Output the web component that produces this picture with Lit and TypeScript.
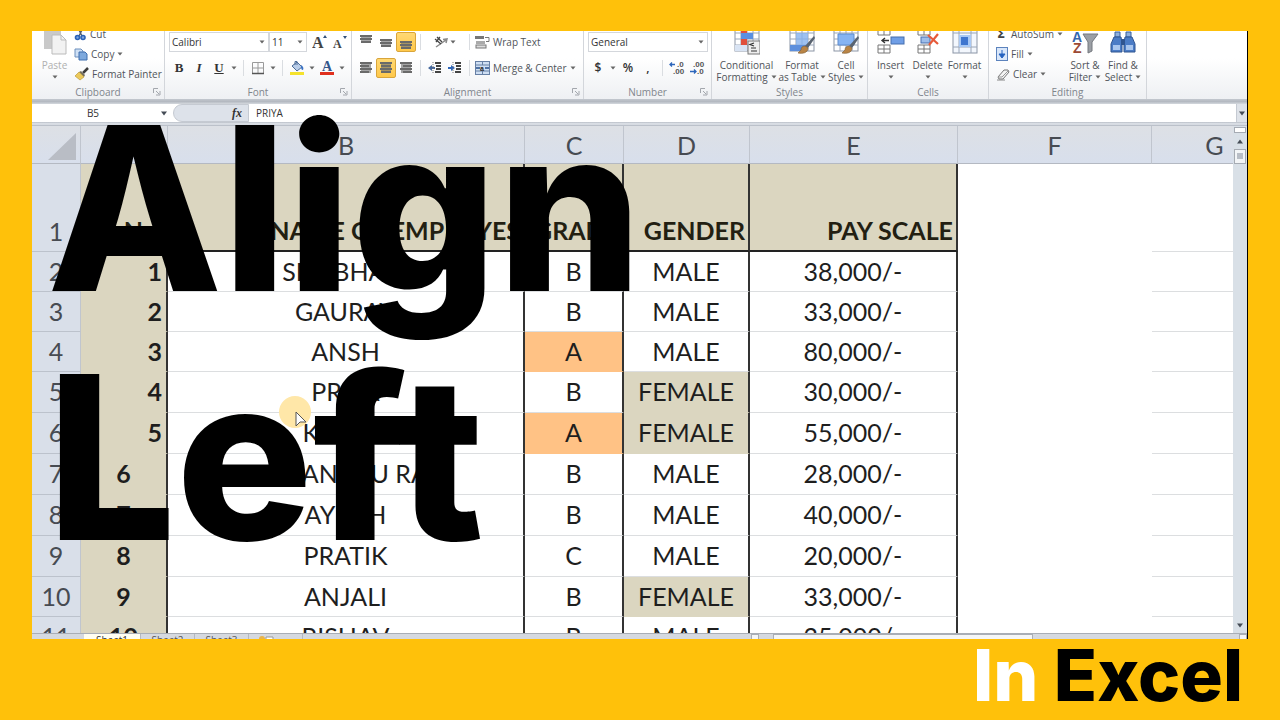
import { LitElement, html, css, svg, nothing } from "lit";
import { customElement } from "lit/decorators.js";
import { classMap } from "lit/directives/class-map.js";

const icon = (w: number, h: number, body: unknown) =>
  html`<svg class="ico" width=${w} height=${h} viewBox="0 0 ${w} ${h}" aria-hidden="true">${body}</svg>`;

const caret = html`<svg class="caret" width="6" height="4" viewBox="0 0 6 4" aria-hidden="true"><path d="M.5 .5h5L3 3.5z" fill="#666" /></svg>`;

const lines = (top: number, rows: number[][]) =>
  icon(14, 14, svg`<rect x="2" y=${top} width="10" height=${rows.length * 3 - 1} fill="#6a6a6a" opacity=".6"/>
    ${rows.map(([x, w], i) => svg`<rect x=${x} y=${top + i * 3} width=${w} height="2" fill="#6a6a6a"/>`)}`);

const grid = (extra: unknown) =>
  icon(26, 24, svg`
    <rect x="1" y="-6" width="24" height="26" fill="#fff" stroke="#8b95a5"/>
    <path d="M1 2h24M1 8h24M1 14h24M7 -6v26M13 -6v26M19 -6v26" stroke="#9aa6b8" fill="none"/>
    ${extra}`);

const brush = svg`<path d="M25 5l-9 10 3 2 7-10z" fill="#59636f"/><path d="M16 15c-3 0-4 2-4 4l-3 3c4 1 10 0 10-5z" fill="#b98445" stroke="#7c5a31" stroke-width=".6"/>`;

const ic = {
  paste: icon(24, 24, svg`<path d="M1-4h17v22H1z" fill="#c9c9c9"/><path d="M9 4h9l5 5v14H9z" fill="#f2f2f2" stroke="#bbb"/><path d="M18 4v5h5" fill="none" stroke="#bbb"/>`),
  cut: icon(13, 13, svg`<path d="M4 0l4 8M9 0L5 8" stroke="#55606e" stroke-width="1.4"/><circle cx="3.500" cy="9.500" r="2" fill="#7ea4dc" stroke="#2b62b8" stroke-width="1.600"/><circle cx="9" cy="9.500" r="2" fill="#7ea4dc" stroke="#2b62b8" stroke-width="1.600"/>`),
  copy: icon(14, 13, svg`<path d="M1 1h6l2 2v6H1z" fill="#cfe0f5" stroke="#6d8fbd"/><path d="M5 4h6l2 2v6H5z" fill="#7ea9dd" stroke="#3f6fae"/>`),
  painter: icon(15, 14, svg`<path d="M14 1L9 6" stroke="#3c3c3c" stroke-width="2.500"/><path d="M7 4l4 4-1 2-5-5z" fill="#77705f"/><path d="M5 5l5 5-4 3-5-4z" fill="#ecc95b" stroke="#b08e2c" stroke-width=".6"/>`),
  growA: icon(16, 16, svg`<text x="0" y="14" font-family="Liberation Serif" font-weight="700" font-size="16" fill="#444">A</text><path d="M11 4l2-3 2 3z" fill="#33517c"/>`),
  shrinkA: icon(16, 16, svg`<text x="1" y="14" font-family="Liberation Serif" font-weight="700" font-size="12" fill="#444">A</text><path d="M11 2h4l-2 3z" fill="#33517c"/>`),
  borders: icon(14, 14, svg`<path d="M1.500 1.500h11v11h-11zM7 1.500v11M1.500 7h11" fill="none" stroke="#9a9a9a"/><path d="M1 12.500h12" stroke="#555" stroke-width="1.500"/>`),
  bucket: icon(16, 16, svg`<path d="M3 6l5-4 5 5-5 4z" fill="#b9cde8" stroke="#4d6d98"/><path d="M6 5V1.500h2V5" fill="none" stroke="#4d6d98"/><path d="M12 5c2 1 3 3 2 5-2 0-2-2-2-5z" fill="#3a72c4"/><rect x="1" y="12" width="14" height="3" fill="#f5e22c"/>`),
  fontA: icon(16, 16, svg`<text x="3" y="11" font-family="Liberation Serif" font-weight="700" font-size="14" fill="#34568b">A</text><rect x="1" y="12" width="14" height="3" fill="#e0301e"/>`),
  top: lines(0, [[1, 12], [1, 12], [2, 10]]),
  mid: lines(4, [[1, 12], [1, 12], [2, 10]]),
  bot: lines(6, [[1, 12], [1, 12], [2, 10]]),
  left: lines(1, [[1, 12], [1, 9], [1, 12], [1, 9]]),
  center: lines(1, [[1, 12], [2, 10], [1, 12], [2, 10]]),
  right: lines(1, [[1, 12], [4, 9], [1, 12], [4, 9]]),
  orient: icon(16, 14, svg`<path d="M2 12L12 5M9 4.500l4-.5-1 4" fill="none" stroke="#8a8a8a" stroke-width="1.500"/><path d="M1 4l6 5M3 2l5 5M2 7l4-5" stroke="#444" stroke-width="1.300" fill="none"/>`),
  outdent: icon(14, 14, svg`<path d="M7 2h6M8 5h5M8 8h5M7 11h6" stroke="#444" stroke-width="2"/><path d="M0 7l4-3v2h3v2H4v2z" fill="#44679c"/><path d="M5 1v12" stroke="#777" stroke-dasharray="1 1"/>`),
  indent: icon(14, 14, svg`<path d="M7 2h6M8 5h5M8 8h5M7 11h6" stroke="#444" stroke-width="2"/><path d="M7 7L3 4v2H0v2h3v2z" fill="#2d66bb"/><path d="M5 1v12" stroke="#777" stroke-dasharray="1 1"/>`),
  wrap: icon(15, 14, svg`<rect x="0" y="1" width="9" height="3" fill="#777"/><rect x="1" y="6" width="9" height="3" fill="#aaa"/><rect x="1" y="10" width="10" height="3" fill="#ddd" stroke="#777"/><path d="M10 2.500h4v4h-3" fill="none" stroke="#777"/>`),
  merge: icon(15, 14, svg`<rect x=".5" y=".5" width="14" height="13" fill="#cfdff3" stroke="#6780a5"/><path d="M.5 4h14M.5 10h14M7.500.5V4M7.500 10v3.500" stroke="#6780a5"/><path d="M1 7h4M14 7h-4" stroke="#274f8b" stroke-width="1.500"/><text x="5" y="9.500" font-family="Liberation Sans" font-weight="700" font-size="7" fill="#222">a</text>`),
  incDec: icon(16, 16, svg`<path d="M1 4.500h5M3 2.500l-2 2 2 2" stroke="#2d66bb" stroke-width="1.300" fill="none"/><text x="8" y="7" font-family="Liberation Sans" font-weight="700" font-size="8" fill="#555">.0</text><text x="4" y="14" font-family="Liberation Sans" font-weight="700" font-size="8" fill="#555">.00</text>`),
  decDec: icon(16, 16, svg`<text x="4" y="7" font-family="Liberation Sans" font-weight="700" font-size="8" fill="#555">.00</text><text x="8" y="14" font-family="Liberation Sans" font-weight="700" font-size="8" fill="#555">.0</text><path d="M1 11.500h6M5 9.500l2 2-2 2" stroke="#2d66bb" stroke-width="1.300" fill="none"/>`),
  cond: grid(svg`<path d="M7 -6h6v8H7zM7 8h6v6H7z" fill="#e0503c"/><path d="M13 2h6v6h-6z" fill="#5a8fe0"/><path d="M7 2h6v6H7z" fill="#5a8fe0"/><path d="M1 14h12v6H1z" fill="#d9e4f4"/><rect x="14" y="10" width="12" height="13" fill="#eee" stroke="#777"/><path d="M20 12l-4 1.500 4 1.500M17 17h5M17 20h6" stroke="#333" stroke-width="1.200" fill="none"/>`),
  table: grid(svg`<path d="M7 2h12v12H7z" fill="#86b1ec" opacity=".8"/><path d="M1 14h16v6H1z" fill="#5d8fdc"/>${brush}`),
  cell: grid(svg`<path d="M5 3h16v11H5z" fill="#86b4f3" stroke="#5f8cce"/>${brush}`),
  insert: icon(28, 24, svg`<path d="M1-4h12v8H1zM1 14h12v8H1zM7-4v8M7 14v8M1 18h12" fill="#fff" stroke="#777"/><rect x="14" y="6" width="13" height="7" fill="#6f9ee6" stroke="#466fae"/><path d="M12 9.500H5M8 7L5 9.500 8 12" stroke="#333" stroke-width="1.400" fill="none"/>`),
  del: icon(24, 24, svg`<path d="M2-4h12v8H2zM2 14h12v8H2zM8-4v8M8 14v8M2 18h12" fill="#fff" stroke="#777"/><rect x="5" y="6" width="9" height="6" fill="#9dbdea" stroke="#466fae"/><path d="M12 4l10 9M22 3l-9 11" stroke="#e65a3a" stroke-width="2.200"/>`),
  format: icon(26, 24, svg`<rect x="1" y="-6" width="24" height="28" fill="#f3f7fd" stroke="#8b95a5"/><path d="M1 2h24M1 16h24M7-6v28M19-6v28" stroke="#9aa6b8"/><path d="M7 4h12v12H7z" fill="#a9c9f5"/><path d="M9 6h7v8H9z" fill="#3f76cf"/>`),
  sum: icon(12, 12, svg`<text x="1" y="10" font-family="DejaVu Sans" font-weight="700" font-size="12" fill="#444">Σ</text>`),
  fill: icon(12, 14, svg`<rect x=".5" y=".5" width="11" height="13" fill="#d9e7fa" stroke="#5c83bd"/><path d="M6 3v5M3 7l3 4 3-4z" fill="#2562c0" stroke="#2562c0"/>`),
  clear: icon(14, 13, svg`<path d="M2 9l6-7h4l1 2-6 7H3z" fill="#f4f4f4" stroke="#777"/><path d="M2 9h4l6-6" fill="none" stroke="#999"/><path d="M1 12h8" stroke="#888"/>`),
  sort: icon(28, 24, svg`<text x="1" y="11" font-family="Liberation Sans" font-weight="700" font-size="14" fill="#3566ad">A</text><text x="2" y="22" font-family="Liberation Sans" font-weight="700" font-size="14" fill="#9c4a35">Z</text><path d="M12 3h15l-6 8v9l-4 2v-11z" fill="#9b9fa5" stroke="#74787e"/>`),
  find: icon(26, 24, svg`<path d="M5 1h5v5H5zM16 1h5v5h-5z" fill="#8fb0dd" stroke="#385f9b"/><path d="M4 6h7l1 6v9H1v-8zM15 6h7l3 7v8H14v-9z" fill="#4b7cc6" stroke="#2f5590"/><rect x="11" y="8" width="4" height="6" fill="#2f5590"/><path d="M3 14h7v5H3zM16 14h7v5h-7z" fill="#a9c6ee"/>`),
};

interface Row { n: number; no: string; name: string; grade: string; sex: string; pay: string }
const rows: Row[] = [
  ["1", "SHUBHAM", "B", "MALE", "38,000/-"],
  ["2", "GAURAV", "B", "MALE", "33,000/-"],
  ["3", "ANSH", "A", "MALE", "80,000/-"],
  ["4", "PRIYA", "B", "FEMALE", "30,000/-"],
  ["5", "KAVITA", "A", "FEMALE", "55,000/-"],
  ["6", "HIMANSHU RAJ", "B", "MALE", "28,000/-"],
  ["7", "AYUSH", "B", "MALE", "40,000/-"],
  ["8", "PRATIK", "C", "MALE", "20,000/-"],
  ["9", "ANJALI", "B", "FEMALE", "33,000/-"],
  ["10", "RISHAV", "B", "MALE", "25,000/-"],
].map(([no, name, grade, sex, pay], i) => ({ n: i + 2, no, name, grade, sex, pay }));

@customElement("excel-ribbon")
export class ExcelRibbon extends LitElement {
  static styles = css`
    :host { display: block; }
    .ribbon {
      display: flex; height: 68px; overflow: hidden;
      background: linear-gradient(#fff 40%, #eef0f3);
      font: 500 10px/12px "Open Sans", sans-serif; color: #50545a;
    }
    .edge { height: 5px; background: linear-gradient(#c3c8cf, #b4b9c1 50%, #d4d8de); }
    .group { display: flex; flex-direction: column; border-right: 1px solid #d3d6db; box-sizing: border-box; flex: none; }
    .body { flex: 1; min-height: 0; display: flex; align-items: flex-end; padding: 0 4px; }
    .label { display: flex; justify-content: center; height: 15px; line-height: 16px; color: #80858c; position: relative; }
    .launch { position: absolute; right: 3px; top: 4px; }
    .w-clip { width: 133px; } .w-font { width: 187px; } .w-align { width: 232px; } .w-num { width: 128px; }
    .w-style { width: 156px; } .w-cells { width: 121px; } .w-edit { width: 158px; }
    button {
      all: unset; box-sizing: border-box; display: inline-flex; align-items: center; justify-content: center;
      white-space: nowrap; flex: none;
    }
    svg { display: block; flex: none; overflow: hidden; }
    .rows { display: flex; flex-direction: column; gap: 6px; padding-bottom: 6px; flex: 1; }
    .row { display: flex; align-items: center; height: 20px; }
    .tool { width: 20px; height: 20px; }
    .wide { width: 40px; }
    .drop { width: 10px; height: 20px; }
    .on { background: linear-gradient(#ffd873, #ffc84a); border: 1px solid #d9a53a; border-radius: 2px; }
    .sep { width: 1px; height: 16px; margin: 0 4px; background: #dadde1; flex: none; }
    .text { gap: 3px; height: 20px; padding-left: 1px; }
    .glyph { font: 700 13px/20px "Liberation Serif", serif; color: #333; }
    .italic { font-style: italic; } .under { text-decoration: underline; }
    .sans { font: 600 12px/20px "Open Sans", sans-serif; }
    .pick { position: relative; display: flex; box-sizing: border-box; height: 20px; }
    .pick select {
      appearance: none; border: 1px solid #d4d7dc; border-radius: 0; background: #fff; width: 100%; margin: 0;
      padding: 0 2px; font: 500 10px/16px "Open Sans", sans-serif; color: #333;
    }
    .pick .caret { position: absolute; right: 4px; top: 8px; }
    .p-name { width: 100px; } .p-size { width: 38px; margin-right: 3px; } .p-num { width: 120px; }
    .big { flex-direction: column; text-align: center; height: 54px; justify-content: flex-end; padding-bottom: 1px; }
    .big .ico { margin-bottom: 4px; }
    .two { display: flex; height: 12px; align-items: center; justify-content: center; gap: 3px; }
    .b-cond { width: 61px; } .b-table { width: 50px; } .b-cell { width: 38px; } .b-std { width: 37px; }
    .stack { display: flex; flex-direction: column; margin-left: 1px; }
    .faint { color: #b0b0b0; }
    .stack button { height: 20px; gap: 3px; justify-content: flex-start; }
    .w-edit .stack { margin: 0 3px; }
  `;

  private launch = html`<svg class="launch" width="8" height="8" viewBox="0 0 8 8"><path d="M.5 5V.5H5M3 3l3 3M7 3v4H3" fill="none" stroke="#a3a7ad" /></svg>`;

  private group(cls: string, label: string, body: unknown, launcher = false) {
    return html`<section class="group ${cls}" aria-label=${label}>
      <div class="body">${body}</div>
      <div class="label">${label}${launcher ? this.launch : nothing}</div>
    </section>`;
  }
  private tool(name: string, body: unknown, cls = "") {
    return html`<button class="tool ${cls}" aria-label=${name}>${body}</button>`;
  }
  private drop(name: string) {
    return html`<button class="drop" aria-label="${name} options">${caret}</button>`;
  }
  private pick(cls: string, name: string, value: string) {
    return html`<span class="pick ${cls}"><select aria-label=${name}><option>${value}</option></select>${caret}</span>`;
  }
  private big(cls: string, art: unknown, one: string, two = "") {
    return html`<button class="big ${cls}">${art}<span>${one}</span><span class="two">${two}${caret}</span></button>`;
  }

  render() {
    const sep = html`<span class="sep"></span>`;
    return html`
      <div class="ribbon">
        ${this.group("w-clip", "Clipboard", html`
          ${this.big("b-std faint", ic.paste, "Paste")}
          <div class="stack">
            <button>${ic.cut}Cut</button>
            <button>${ic.copy}Copy ${caret}</button>
            <button>${ic.painter}Format Painter</button>
          </div>`, true)}
        ${this.group("w-font", "Font", html`<div class="rows">
          <div class="row">${this.pick("p-name", "Font", "Calibri")}${this.pick("p-size", "Font size", "11")}
            ${this.tool("Grow font", ic.growA)}${this.tool("Shrink font", ic.shrinkA)}</div>
          <div class="row">
            ${this.tool("Bold", "B", "glyph")}${this.tool("Italic", "I", "glyph italic")}${this.tool("Underline", "U", "glyph under")}
            ${this.drop("Underline")}${sep}${this.tool("Borders", ic.borders)}${this.drop("Borders")}${sep}
            ${this.tool("Fill colour", ic.bucket)}${this.drop("Fill colour")}${this.tool("Font colour", ic.fontA)}${this.drop("Font colour")}
          </div></div>`, true)}
        ${this.group("w-align", "Alignment", html`<div class="rows">
          <div class="row">
            ${this.tool("Top align", ic.top)}${this.tool("Middle align", ic.mid)}${this.tool("Bottom align", ic.bot, "on")}${sep}
            ${this.tool("Orientation", html`${ic.orient}${caret}`, "wide")}${sep}
            <button class="text">${ic.wrap}Wrap Text</button>
          </div>
          <div class="row">
            ${this.tool("Align left", ic.left)}${this.tool("Center", ic.center, "on")}${this.tool("Align right", ic.right)}${sep}
            ${this.tool("Decrease indent", ic.outdent)}${this.tool("Increase indent", ic.indent)}${sep}
            <button class="text">${ic.merge}Merge &amp; Center ${caret}</button>
          </div></div>`, true)}
        ${this.group("w-num", "Number", html`<div class="rows">
          <div class="row">${this.pick("p-num", "Number format", "General")}</div>
          <div class="row">
            ${this.tool("Currency", "$", "glyph sans")}${this.drop("Currency")}${this.tool("Percent", "%", "glyph sans")}
            ${this.tool("Comma style", ",", "glyph sans")}${sep}${this.tool("Increase decimal", ic.incDec)}${this.tool("Decrease decimal", ic.decDec)}
          </div></div>`, true)}
        ${this.group("w-style", "Styles", html`
          ${this.big("b-cond", ic.cond, "Conditional", "Formatting")}
          ${this.big("b-table", ic.table, "Format", "as Table")}
          ${this.big("b-cell", ic.cell, "Cell", "Styles")}`)}
        ${this.group("w-cells", "Cells", html`
          ${this.big("b-std", ic.insert, "Insert")}${this.big("b-std", ic.del, "Delete")}${this.big("b-std", ic.format, "Format")}`)}
        ${this.group("w-edit", "Editing", html`
          <div class="stack">
            <button>${ic.sum}AutoSum ${caret}</button>
            <button>${ic.fill}Fill ${caret}</button>
            <button>${ic.clear}Clear ${caret}</button>
          </div>
          ${this.big("b-cell", ic.sort, "Sort &", "Filter")}${this.big("b-cell", ic.find, "Find &", "Select")}`)}
      </div>
      <div class="edge"></div>`;
  }
}

@customElement("excel-sheet")
export class ExcelSheet extends LitElement {
  static styles = css`
    :host { display: flex; flex-direction: column; flex: 1; min-height: 0; }
    svg { display: block; flex: none; }
    .formula {
      display: flex; height: 18px; flex: none; background: #fff;
      font: 500 10px/18px "Open Sans", sans-serif; color: #333;
    }
    .formula input { all: unset; font: inherit; color: #333; box-sizing: border-box; min-width: 0; }
    .formula .box { width: 122px; flex: none; text-align: center; }
    .pull { all: unset; width: 19px; flex: none; display: flex; align-items: center; justify-content: center; }
    .fx {
      all: unset; box-sizing: border-box; width: 76px; flex: none; background: #dde2ea; border-radius: 9px 0 0 9px;
      border: 1px solid #c5cad2; padding-right: 6px; text-align: right;
      font: italic 700 12px/16px "Liberation Serif", serif;
    }
    .formula .value { flex: 1; padding-left: 7px; }
    .more { all: unset; width: 10px; flex: none; background: #dfe3e9; border-left: 1px solid #c5cad2; display: flex; align-items: center; justify-content: center; }
    .rule { height: 4px; flex: none; background: linear-gradient(#b9bec7, #e4e8ee 50%, #aeb4be); }
    .pane { flex: 1; min-height: 0; display: flex; overflow: hidden; background: #fff; }
    .view { flex: 1; min-width: 0; overflow: hidden; position: relative; }
    table { border-collapse: separate; border-spacing: 0; table-layout: fixed; width: 1246px; font: 400 25px/36px Lato, sans-serif; color: #1e1e1e; }
    .c0 { width: 49px; } .ca { width: 87px; } .cb { width: 357px; } .cc { width: 99px; }
    .cd { width: 126px; } .ce { width: 208px; } .cf { width: 194px; } .cg { width: 126px; }
    th, td { padding: 0 0 2px; box-sizing: border-box; text-align: center; white-space: nowrap; overflow: hidden; }
    .col th {
      height: 38px; padding: 0; font-weight: 400; color: #474b52; background: linear-gradient(#dde0e5, #d8dfec);
      border-right: 1px solid #c0c5ce; border-bottom: 1px solid #b4b9c2;
    }
    .num { font-weight: 400; color: #474b52; background: #d9dfe9; border-right: 1px solid #c0c5ce; border-bottom: 1px solid #bcc2cc; }
    .cell { border-right: 2px solid #333; border-bottom: 1px solid #dcdee0; }
    .grid { border-bottom: 1px solid #dcdee0; }
    .head td, .head .num { height: 88px; vertical-align: bottom; }
    .head .cell { background: #dbd6c0; font-weight: 700; text-align: right; padding-right: 3px; border-bottom: 2px solid #222; color: #231f12; }
    .head .no, .no { background: #dbd6c0; border-bottom-color: #dbd6c0; font-weight: 700; }
    .end { text-align: right; padding-right: 4px; }
    .s td { height: 40px; }
    .l td { height: 41px; }
    .tan { background: #dbd6c0; border-bottom-color: #dbd6c0; }
    .orange { background: #ffc285; border-bottom-color: #ffc285; }
    .pointer { position: absolute; left: 245px; top: 268px; }
    .bar { width: 14px; flex: none; background: #d9e0e7; display: flex; flex-direction: column; align-items: center; }
    .split { width: 12px; height: 6px; border: 1px solid #a6abb3; background: #fff; box-sizing: border-box; margin-top: 1px; }
    .bar button { all: unset; height: 16px; display: flex; align-items: center; }
    .thumb { width: 12px; height: 15px; border: 1px solid #a6abb3; background: #f3f5f7; box-sizing: border-box; flex: none; padding: 3px 2px; }
    .thumb i { display: block; height: 6px; background: #b9bec6; }
    .fill { flex: 1; }
    .tabs {
      display: flex; height: 6px; flex: none; overflow: hidden; background: #d5d9e0; border-top: 1px solid #a9aeb6; box-sizing: border-box;
      font: 500 10px/12px "Open Sans", sans-serif; color: #555;
    }
    .tabs button { all: unset; box-sizing: border-box; height: 12px; width: 54px; text-align: center; flex: none; border-right: 1px solid #b4b9c1; }
    .tabs .nav { width: 13px; border: 0; padding-top: 2px; padding-left: 3px; }
    .tabs .active { background: #fffef2; width: 57px; color: #333; }
    .track { flex: none; width: 496px; display: flex; align-items: flex-start; gap: 14px; }
    .knob { width: 260px; height: 12px; background: #f4f6f8; border: 1px solid #a9aeb6; box-sizing: border-box; }
    .grip { width: 8px; height: 12px; background: #f4f6f8; border: 1px solid #a9aeb6; box-sizing: border-box; }
  `;

  private line(r: Row) {
    const pick = (on: boolean, name: string) => classMap({ cell: true, [name]: on });
    return html`<tr class=${r.n >= 5 && r.n <= 9 ? "l" : "s"}>
      <th class="num" scope="row">${r.n}</th>
      <td class=${classMap({ cell: true, no: true, end: r.n < 7 })}>${r.no}</td>
      <td class="cell">${r.name}</td>
      <td class=${pick(r.grade === "A", "orange")}>${r.grade}</td>
      <td class=${pick(r.sex === "FEMALE", "tan")}>${r.sex}</td>
      <td class="cell">${r.pay}</td>
      <td></td>
      <td class="grid"></td>
    </tr>`;
  }

  render() {
    const arrow = (d: string) => html`<svg width="8" height="5" viewBox="0 0 8 5" aria-hidden="true"><path d=${d} fill="#444b55" /></svg>`;
    return html`
      <div class="formula">
        <input class="box" aria-label="Name box" value="B5" />
        <button class="pull" aria-label="Open names">${arrow("M1 .5h6L4 4.500z")}</button>
        <button class="fx" aria-label="Insert function">fx</button>
        <input class="value" aria-label="Formula" value="PRIYA" />
        <button class="more" aria-label="Expand formula bar">${arrow("M1 .5h6L4 4.500z")}</button>
      </div>
      <div class="rule"></div>
      <div class="pane">
        <div class="view">
          <table>
            <colgroup><col class="c0" /><col class="ca" /><col class="cb" /><col class="cc" /><col class="cd" /><col class="ce" /><col class="cf" /><col class="cg" /></colgroup>
            <thead><tr class="col">
              <th><svg width="48" height="36" viewBox="0 0 48 36" aria-hidden="true"><path d="M44 6v27H16z" fill="#b9bdc5" /></svg></th>
              ${[..."ABCDEFG"].map((c) => html`<th scope="col">${c}</th>`)}
            </tr></thead>
            <tbody>
              <tr class="head">
                <th class="num" scope="row">1</th>
                <td class="cell no">No.</td><td class="cell">NAME OF EMPLOYES</td><td class="cell">GRADE</td>
                <td class="cell">GENDER</td><td class="cell">PAY SCALE</td><td></td><td class="grid"></td>
              </tr>
              ${rows.map((r) => this.line(r))}
            </tbody>
          </table>
          <svg class="pointer" width="36" height="36" viewBox="0 0 36 36" aria-hidden="true">
            <circle cx="18" cy="18" r="16" fill="#ffe7a8" />
            <path d="M19 18v14l4-4 6 0z" fill="#fff" stroke="#555" />
          </svg>
        </div>
        <div class="bar">
          <span class="split"></span>
          <button aria-label="Scroll up">${arrow("M1 4.500h6L4 .5z")}</button>
          <span class="thumb"><i></i></span>
          <span class="fill"></span>
          <button aria-label="Scroll down">${arrow("M1 .5h6L4 4.500z")}</button>
        </div>
      </div>
      <div class="tabs">
        ${["M6 0v5L2 2.500z", "M6 0v5L2 2.500z", "M2 0v5L6 2.500z", "M2 0v5L6 2.500z"].map((d, i) => html`<button class="nav" aria-label="Sheet scroll ${i + 1}">${arrow(d)}</button>`)}
        <button class="active">Sheet1</button><button>Sheet2</button><button>Sheet3</button>
        <button aria-label="Insert sheet"><svg width="53" height="10" viewBox="0 0 53 10"><circle cx="13" cy="4" r="3" fill="#e8b44c" /><path d="M17 2h7v7h-7z" fill="#fff" stroke="#999" /></svg></button>
        <span class="fill"></span>
        <div class="track"><span class="grip"></span><span class="knob"></span><span class="fill"></span><span class="grip"></span></div>
      </div>`;
  }
}

@customElement("app-root")
export class AppRoot extends LitElement {
  static styles = css`
    :host {
      display: flex; flex-direction: column; height: 100vh; box-sizing: border-box; padding: 31px 32px 0;
      background: #ffc10a; overflow: hidden; position: relative;
    }
    .window { flex: 1; min-height: 0; display: flex; flex-direction: column; border-right: 1px solid #000; overflow: hidden; }
    h1, p { margin: 0; font-family: Inter, sans-serif; font-weight: 800; color: #000; }
    h1 { position: absolute; left: 47px; top: 84px; font-size: 228px; line-height: 249px; pointer-events: none; }
    h1 span { display: block; }
    p { flex: none; height: 81px; font-size: 71px; line-height: 73px; text-align: right; padding-right: 5px; }
    .white { color: #fff; }
  `;
  render() {
    return html`
      <main class="window"><excel-ribbon></excel-ribbon><excel-sheet></excel-sheet></main>
      <p><span class="white">In</span> Excel</p>
      <h1><span>Align</span><span>Left</span></h1>`;
  }
}
